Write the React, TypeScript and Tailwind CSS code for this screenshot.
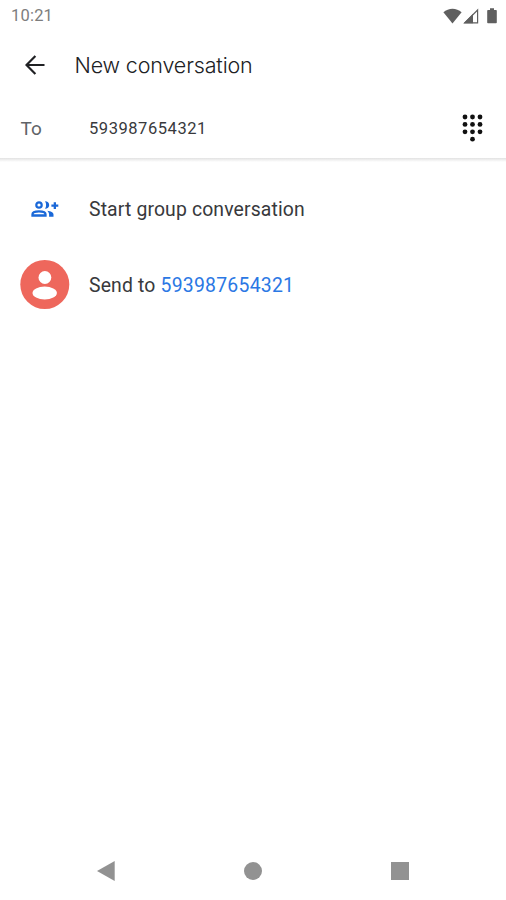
const StatusBar = () => (
  <div className="flex h-8 items-center justify-between pl-[11px] pr-[9px] text-[#7d7d7d]">
    <span className="pt-px text-[16.5px] tracking-[0.2px]">10:21</span>
    <div className="flex items-center">
      <svg width="19" height="16" viewBox="0 0 19 16" fill="#5f5f5f">
        <path d="M9.5 15.5 0.4 4.3C5.5-0.6 13.5-0.6 18.6 4.3Z" />
      </svg>
      <svg className="ml-[1px]" width="16" height="16" viewBox="0 0 16 16">
        <path d="M14.6 2v12.8H1.8Z" fill="none" stroke="#5f5f5f" strokeWidth="1.2" />
        <path d="M0.5 15.3 10 5.8v9.5Z" fill="#5f5f5f" />
      </svg>
      <svg className="ml-[8px]" width="10" height="16" viewBox="0 0 10 16" fill="#5f5f5f">
        <path d="M3 0.2h4V2h2q.8 0 .8.8v11.7q0 .8-.8.8H1q-.8 0-.8-.8V2.8Q.2 2 1 2h2Z" />
      </svg>
    </div>
  </div>
);

const GroupIcon = () => (
  <svg className="ml-[31px]" width="28" height="18" viewBox="0 0 28 18" fill="#1a68d8">
    <circle cx="8" cy="5" r="2.7" fill="none" stroke="#1a68d8" strokeWidth="2.2" />
    <path
      d="M1.5 15.5v-1.3C1.5 12.2 5 11.3 8 11.3s6.5.9 6.5 2.9v1.3Z"
      fill="none"
      stroke="#1a68d8"
      strokeWidth="2.3"
    />
    <path d="M14 1.3c2.6 0 4.2 1.5 4.2 3.7S16.6 8.7 14 8.700c1.5-2.2 1.5-5.2 0-7.4Z" />
    <path d="M16.2 10.7c3.6.4 6.3 1.6 6.3 3.8v2.2h-4.4v-2.2c0-1.6-.8-2.9-1.9-3.8Z" />
    <path d="M22.7 2.2h2.3v2.2h2.3v2.3H25V9h-2.3V6.7h-2.3V4.4h2.3Z" />
  </svg>
);

const dots = [
  [3, 3], [10.5, 3], [18, 3],
  [3, 10.4], [10.5, 10.4], [18, 10.4],
  [3, 17.8], [10.5, 17.8], [18, 17.8],
  [10.5, 25.2],
];

export default function App() {
  return (
    <div className="flex h-[900px] w-[506px] flex-col overflow-hidden bg-white font-['Roboto',sans-serif] text-[#38393c]">
      <StatusBar />

      {/* header */}
      <div className="h-[126px]">
        <div className="flex h-[65px] items-center">
          <svg className="ml-[25px]" width="20" height="20" viewBox="0 0 20 20" fill="none" stroke="#202124" strokeWidth="2.2">
            <path d="M19.5 10H2M10.4 1 1.5 10l8.9 9" />
          </svg>
          <div className="ml-[29.5px] pt-px font-['Inter',sans-serif] text-[21.5px] font-light tracking-[-0.15px] text-[#202124]">
            New conversation
          </div>
        </div>
        <div className="flex h-[62px] items-center pr-[23px]">
          <span className="w-[89px] pl-[20.5px] pt-[3px] text-[19px] text-[#5f6368]">To</span>
          <span className="flex-1 pt-[3px] text-[16.5px] tracking-[0.55px]">593987654321</span>
          <svg width="21" height="28" viewBox="0 0 21 28" fill="#111">
            {dots.map(([x, y]) => (
              <circle key={`${x}-${y}`} cx={x} cy={y} r="2.4" />
            ))}
          </svg>
        </div>
      </div>
      <div className="h-1 bg-linear-to-b from-[#e2e2e2] to-white" />

      {/* suggestions */}
      <div className="flex-1 pt-[9px]">
        <div className="flex h-[76px] items-center">
          <div className="w-[89px]">
            <GroupIcon />
          </div>
          <span className="pt-[2px] text-[19.4px] tracking-[0.13px]">Start group conversation</span>
        </div>
        <div className="flex h-[76px] items-center">
          <div className="w-[89px]">
            <svg className="ml-[20px]" width="50" height="50" viewBox="0 0 50 50">
              <circle cx="24.8" cy="24.5" r="24.5" fill="#ee675c" />
              <circle cx="24.9" cy="17.5" r="6.4" fill="#fff" />
              <ellipse cx="24.7" cy="33" rx="12.2" ry="6.5" fill="#fff" />
            </svg>
          </div>
          <span className="pt-[2px] text-[19.4px] tracking-[0.15px]">
            Send to <span className="tracking-[0.25px] text-[#2b78e4]">593987654321</span>
          </span>
        </div>
      </div>

      {/* system navigation */}
      <div className="flex h-[58px] items-center justify-between pl-[97px] pr-[97.5px]">
        <svg width="18" height="20" viewBox="0 0 18 20" fill="#929292">
          <path d="M0 10 17.7 0v20Z" />
        </svg>
        <div className="size-[18px] rounded-full bg-[#929292]" />
        <div className="size-[18px] bg-[#929292]" />
      </div>
    </div>
  );
}
